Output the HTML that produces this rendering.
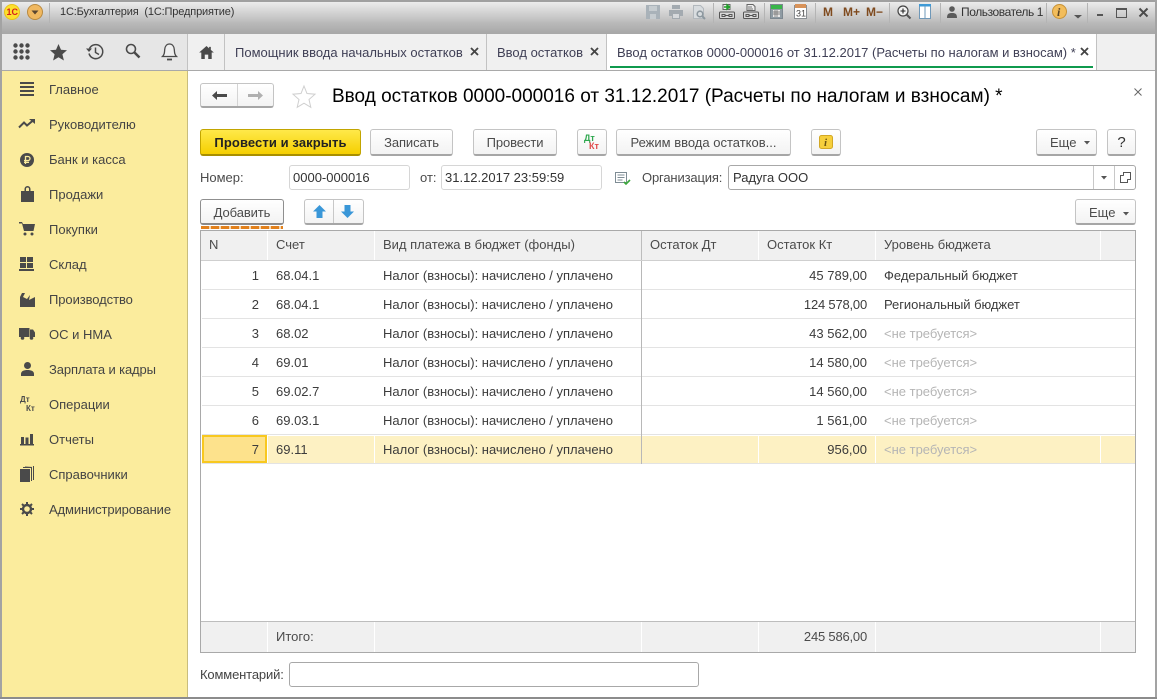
<!DOCTYPE html>
<html><head><meta charset="utf-8"><style>
html,body{margin:0;padding:0}
body{width:1157px;height:699px;overflow:hidden;position:relative;background:#fff;font:13px "Liberation Sans",sans-serif;color:#4b4b4b}
.a{position:absolute}
.t{position:absolute;white-space:nowrap;line-height:14px}
.btn{position:absolute;box-sizing:border-box;border:1px solid #c4c4c4;border-bottom:2px solid #a6a6a6;border-radius:3px;background:linear-gradient(#fff,#f3f3f3);text-align:center;line-height:23px;white-space:nowrap;color:#4b4b4b}
.inp{position:absolute;box-sizing:border-box;border:1px solid #d6d6d6;border-radius:3px;background:#fff;color:#333;line-height:24px;padding-left:3px;white-space:nowrap}
.v{position:absolute;width:1px;background:#dcdcdc}
.h{position:absolute;height:1px;left:202px;width:933px;background:#e3e3e3}
svg{position:absolute;overflow:visible}
.r{text-align:right}
.g{color:#b5b5b5}
.d{color:#3c3c3c}
.s{position:absolute;top:3px;width:1px;height:20px;background:#b4b4b4}
</style></head><body>
<div class="a" style="left:0;top:0;width:1157px;height:34px;background:linear-gradient(#ececec 2px,#d4d4d4 12px,#bfbfbf 21px,#bbb 22px,#a8a8a8 33px)"></div>
<div class="a" style="left:0;top:0;width:1157px;height:2px;background:#a0a0a0"></div>
<div class="a" style="left:0;top:0;width:2px;height:699px;background:#a3a3a3"></div>
<div class="a" style="left:1155px;top:0;width:2px;height:699px;background:#a3a3a3"></div>
<div class="a" style="left:0;top:697px;width:1157px;height:2px;background:#8c8c8c"></div>

<svg style="left:4px;top:4px" width="16" height="16"><circle cx="8" cy="8" r="7.500" fill="#fde02c" stroke="#e8c21a"/><text x="2.500" y="11" font-size="9" font-weight="bold" fill="#d3201c" font-family="Liberation Sans">1С</text></svg>
<svg style="left:27px;top:4px" width="16" height="16"><circle cx="8" cy="8" r="7.500" fill="#f0b860" stroke="#b98a40"/><path d="M4.500 6.500h7L8 10.500z" fill="#5a4630"/></svg>
<div class="s" style="left:49px"></div>
<div class="t" style="left:60px;top:5px;font-size:11px;color:#333;letter-spacing:-.15px">1С:Бухгалтерия&nbsp; (1С:Предприятие)</div>

<!-- title bar tools -->
<svg style="left:646px;top:5px" width="14" height="14"><path d="M0 0h14v14H0z" fill="#a9b2b9"/><path d="M3 1h8v5H3zM4 9h6v5H4z" fill="#c6ccd0"/></svg>
<svg style="left:669px;top:5px" width="14" height="14"><path d="M3 0h8v4H3zM0 5h14v6h-3v3H3v-3H0z" fill="#a3aab0"/><path d="M4 9h6v4H4z" fill="#d6d9dc"/></svg>
<svg style="left:693px;top:5px" width="14" height="15"><path d="M.5.500h7l3 3v10h-10z" fill="#d8dcdf" stroke="#b2b8bd"/><circle cx="7" cy="9" r="2.800" fill="none" stroke="#8d989f" stroke-width="1.600"/><path d="M9 11l3 3" stroke="#8d989f" stroke-width="2"/></svg>
<div class="s" style="left:713px"></div>
<svg style="left:719px;top:4px" width="17" height="15"><path d="M4 .5h7v5H4z" fill="#eee" stroke="#666"/><path d="M5 3h4M8 1l2.500 2L8 5z" stroke="#22a22a" fill="#22a22a" stroke-width="1.500"/><rect x=".5" y="8" width="15" height="6.500" rx="1" fill="#d8d8d8" stroke="#555"/><path d="M3 10.500h3v2H3zM10 10.500h3v2h-3zM6 11.500h4" stroke="#555" fill="none"/></svg>
<svg style="left:743px;top:4px" width="17" height="15"><path d="M4 .5h6l2 2v4H4z" fill="#eee" stroke="#666"/><path d="M5 3h4M5 5h5" stroke="#777"/><rect x=".5" y="8" width="15" height="6.500" rx="1" fill="#d8d8d8" stroke="#555"/><path d="M3 10.500h3v2H3zM10 10.500h3v2h-3zM6 11.500h4" stroke="#555" fill="none"/></svg>
<div class="s" style="left:764px"></div>
<svg style="left:770px;top:4px" width="13" height="15"><rect x=".5" y=".5" width="12" height="14" fill="#8f9ba3" stroke="#7d8890"/><rect x="1" y="1" width="11" height="4" fill="#39b54a"/><rect x="3" y="6" width="7" height="7" fill="#e8e8e8"/><path d="M5 6v7M7 6v7M3 8h7M3 10h7" stroke="#666" stroke-width=".7"/></svg>
<svg style="left:794px;top:3px" width="13" height="16"><rect x=".5" y="2.500" width="12" height="13" fill="#fff" stroke="#8a8f93"/><rect x="1" y="1" width="11" height="4" fill="#d8935a"/><text x="2" y="13.500" font-size="9" fill="#444" font-family="Liberation Sans">31</text></svg>
<div class="s" style="left:815px"></div>
<div class="t" style="left:823px;top:5px;font-size:12px;font-weight:bold;color:#7f4a1e">M</div>
<div class="t" style="left:843px;top:5px;font-size:12px;font-weight:bold;color:#7f4a1e">M+</div>
<div class="t" style="left:866px;top:5px;font-size:12px;font-weight:bold;color:#7f4a1e">M−</div>
<div class="s" style="left:889px"></div>
<svg style="left:897px;top:5px" width="14" height="14"><circle cx="6" cy="6" r="5" fill="#f3f3f3" stroke="#444" stroke-width="1.200"/><path d="M3.500 6h5M6 3.500v5" stroke="#222" stroke-width="1.100"/><path d="M9.500 9.500l4 4" stroke="#555" stroke-width="2"/></svg>
<svg style="left:919px;top:4px" width="12" height="15"><rect x=".5" y=".5" width="11" height="14" fill="#fff" stroke="#6f98b8"/><rect x="0" y="0" width="12" height="2.500" fill="#3f9ad6"/><path d="M6 2v13" stroke="#6f98b8"/></svg>
<div class="s" style="left:940px"></div>
<svg style="left:947px;top:6px" width="10" height="12"><circle cx="5" cy="3" r="2.800" fill="#5a5a5a"/><path d="M0 12c0-4 1.500-5 5-5s5 1 5 5z" fill="#5a5a5a"/></svg>
<div class="t" style="left:961px;top:5px;font-size:12px;color:#333;letter-spacing:-.42px">Пользователь 1</div>
<div class="s" style="left:1046px"></div>
<svg style="left:1052px;top:4px" width="15" height="15"><circle cx="7.500" cy="7.500" r="7" fill="#f2bd5c" stroke="#c79236"/><text x="5" y="12" font-size="12" font-weight="bold" font-style="italic" fill="#5a4526" font-family="Liberation Serif">i</text></svg>
<svg style="left:1074px;top:15px" width="8" height="4"><path d="M0 0h8L4 3.500z" fill="#555"/></svg>
<div class="s" style="left:1087px"></div>
<div class="a" style="left:1097px;top:14px;width:6px;height:2px;background:#555"></div>
<div class="a" style="left:1116px;top:8px;box-sizing:border-box;width:11px;height:10px;border:1px solid #555;border-top-width:2px"></div>
<svg style="left:1139px;top:8px" width="9" height="9"><path d="M.5.500l8 8M8.500.500l-8 8" stroke="#4b4b4b" stroke-width="2"/></svg>

<!-- Panel row -->
<div class="a" style="left:2px;top:34px;width:185px;height:36px;background:#e6e6e6"></div>
<div class="a" style="left:187px;top:34px;width:968px;height:36px;background:#f0f0f0"></div>
<div class="a" style="left:2px;top:70px;width:1153px;height:1px;background:#a9a9a9"></div>
<div class="a" style="left:187px;top:34px;width:1px;height:36px;background:#c2c2c2"></div>
<div class="a" style="left:224px;top:34px;width:1px;height:36px;background:#c2c2c2"></div>
<div class="a" style="left:486px;top:34px;width:1px;height:36px;background:#c2c2c2"></div>
<div class="a" style="left:606px;top:34px;width:1px;height:36px;background:#c2c2c2"></div>
<div class="a" style="left:607px;top:34px;width:489px;height:36px;background:#fff"></div>
<div class="a" style="left:1096px;top:34px;width:1px;height:36px;background:#c2c2c2"></div>
<div class="a" style="left:610px;top:66px;width:483px;height:2px;background:#0f9a4e"></div>

<svg style="left:13px;top:43px" width="18" height="18" fill="#4a4a4a"><circle cx="2.500" cy="2.500" r="2.200"/><circle cx="8.500" cy="2.500" r="2.200"/><circle cx="14.500" cy="2.500" r="2.200"/><circle cx="2.500" cy="8.500" r="2.200"/><circle cx="8.500" cy="8.500" r="2.200"/><circle cx="14.500" cy="8.500" r="2.200"/><circle cx="2.500" cy="14.500" r="2.200"/><circle cx="8.500" cy="14.500" r="2.200"/><circle cx="14.500" cy="14.500" r="2.200"/></svg>
<svg style="left:50px;top:44px" width="17" height="17"><path d="M8.500 0l2.500 5.800 6 .5-4.600 4 1.500 6.200-5.400-3.300-5.400 3.300 1.500-6.200L0 6.300l6-.5z" fill="#4a4a4a"/></svg>
<svg style="left:86px;top:43px" width="18" height="18" fill="none" stroke="#4a4a4a" stroke-width="1.500"><path d="M3.500 5.500a7 7 0 1 1-.5 5"/><path d="M0 5.500l3 3.500 3-3.500z" fill="#4a4a4a" stroke="none"/><path d="M9.500 4.500v5l3.500 2"/></svg>
<svg style="left:125px;top:43px" width="16" height="17" fill="none" stroke="#4a4a4a"><circle cx="6" cy="6" r="4.500" stroke-width="1.600"/><path d="M9.500 9.500l5 5" stroke-width="2.500"/></svg>
<svg style="left:161px;top:43px" width="17" height="18" fill="none" stroke="#4a4a4a" stroke-width="1.300"><path d="M1.500 13.500c2-2 2-4 2.200-7C4 3 6 1 8.500 1s4.500 2 4.800 5.500c.2 3 .2 5 2.200 7z" fill="#efefef"/><path d="M6 16.500h5" stroke-width="1.800"/></svg>
<svg style="left:199px;top:46px" width="15" height="13" viewBox="0 0 17 15"><path d="M8.500 0L0 7.500h2.500V15h4v-5h4v5h4V7.500H17L13.500 4.500V1h-2v1.800z" fill="#4a4a4a"/></svg>

<div class="t" style="left:235px;top:46px;color:#3f3f55">Помощник ввода начальных остатков</div>
<svg style="left:470px;top:47px" width="9" height="9"><path d="M1 1l7 7M8 1L1 8" stroke="#444" stroke-width="1.800"/></svg>
<div class="t" style="left:497px;top:46px;color:#3f3f55">Ввод остатков</div>
<svg style="left:590px;top:47px" width="9" height="9"><path d="M1 1l7 7M8 1L1 8" stroke="#444" stroke-width="1.800"/></svg>
<div class="t" style="left:617px;top:46px;color:#3f3f55">Ввод остатков 0000-000016 от 31.12.2017 (Расчеты по налогам и взносам) *</div>
<svg style="left:1080px;top:47px" width="9" height="9"><path d="M1 1l7 7M8 1L1 8" stroke="#444" stroke-width="1.800"/></svg>

<!-- sidebar -->
<div class="a" style="left:2px;top:71px;width:185px;height:626px;background:#fbec9d"></div>
<div class="a" style="left:187px;top:71px;width:1px;height:626px;background:#c9bd7d"></div>
<div class="t" style="left:49px;top:83px;color:#444">Главное</div>
<div class="t" style="left:49px;top:118px;color:#444">Руководителю</div>
<div class="t" style="left:49px;top:153px;color:#444">Банк и касса</div>
<div class="t" style="left:49px;top:188px;color:#444">Продажи</div>
<div class="t" style="left:49px;top:223px;color:#444">Покупки</div>
<div class="t" style="left:49px;top:258px;color:#444">Склад</div>
<div class="t" style="left:49px;top:293px;color:#444;letter-spacing:-.08px">Производство</div>
<div class="t" style="left:49px;top:328px;color:#444">ОС и НМА</div>
<div class="t" style="left:49px;top:363px;color:#444;letter-spacing:-.12px">Зарплата и кадры</div>
<div class="t" style="left:49px;top:398px;color:#444">Операции</div>
<div class="t" style="left:49px;top:433px;color:#444">Отчеты</div>
<div class="t" style="left:49px;top:468px;color:#444">Справочники</div>
<div class="t" style="left:49px;top:503px;color:#444;letter-spacing:-.12px">Администрирование</div>

<svg style="left:20px;top:82px" width="14" height="14" fill="#4a4a4a"><path d="M0 0h14v2H0zM0 4h14v2H0zM0 8h14v2H0zM0 12h14v2H0z"/></svg>
<svg style="left:19px;top:119px" width="16" height="10" fill="none" stroke="#4a4a4a" stroke-width="2"><path d="M0 8.500l5-5 3 3 6-5"/><path d="M10 0h6v5z" fill="#4a4a4a" stroke="none"/></svg>
<svg style="left:20px;top:153px" width="14" height="14"><circle cx="7" cy="7" r="7" fill="#4a4a4a"/><path d="M5.500 11V3.500h2.500a2 2 0 0 1 0 4H4M4 9.300h5" fill="none" stroke="#fbec9d" stroke-width="1.300"/></svg>
<svg style="left:21px;top:186px" width="13" height="16"><path d="M0 5h3.500V3a3 3 0 0 1 6 0v2H13v11H0z" fill="#4a4a4a"/><path d="M5 5V3a1.500 1.500 0 0 1 3 0v2z" fill="#fbec9d"/></svg>
<svg style="left:19px;top:222px" width="16" height="14" fill="#4a4a4a"><path d="M0 0h3l1 2h12l-1.500 7H5L3 1.500H0z"/><circle cx="6" cy="12" r="1.500"/><circle cx="13" cy="12" r="1.500"/></svg>
<svg style="left:19px;top:257px" width="15" height="14" fill="#4a4a4a"><path d="M1 0h6v5H1zM8 0h6v5H8zM1 6h6v5H1zM8 6h6v5H8zM0 12h15v2H0z"/></svg>
<svg style="left:20px;top:292px" width="15" height="15" fill="#4a4a4a"><path d="M0 15V5L2 1h3L3 5l4 2 3-4-1 5 6-3v10z"/></svg>
<svg style="left:19px;top:328px" width="16" height="12" fill="#4a4a4a"><path d="M0 0h10.500v9H0zM11 1.500h3l2 3V9h-5z"/><circle cx="3.500" cy="10" r="1.800"/><circle cx="12.500" cy="10" r="1.800"/></svg>
<svg style="left:21px;top:362px" width="13" height="14" fill="#4a4a4a"><circle cx="6.500" cy="3.500" r="3.500"/><path d="M0 14v-2c0-3 3-4 6.500-4s6.500 1 6.500 4v2z"/></svg>
<div class="t" style="left:20px;top:396px;font-size:8px;font-weight:bold;line-height:8px;color:#4a4a4a">Дт</div>
<div class="t" style="left:26px;top:405px;font-size:8px;font-weight:bold;line-height:8px;color:#4a4a4a">Кт</div>
<svg style="left:20px;top:434px" width="14" height="12" fill="#4a4a4a"><path d="M1 3h3v7H1zM5.500 3.500h3V10h-3zM10 0h3v10h-3zM0 10h14v1.500H0z"/></svg>
<svg style="left:20px;top:466px" width="14" height="16" fill="#4a4a4a"><path d="M0 3h10v13H0zM11 2v13h1V1H3v1zM13 0v14h1V0H5v.5z"/></svg>
<svg style="left:20px;top:502px" width="14" height="14"><circle cx="7" cy="7" r="4" fill="none" stroke="#4a4a4a" stroke-width="2.400"/><path d="M7 0v3M7 11v3M0 7h3M11 7h3M2 2l2 2M10 10l2 2M12 2l-2 2M4 10l-2 2" stroke="#4a4a4a" stroke-width="2"/></svg>

<!-- header -->
<div class="btn" style="left:200px;top:83px;width:74px;height:25px"></div>
<div class="a" style="left:237px;top:84px;width:1px;height:22px;background:#d4d4d4"></div>
<svg style="left:212px;top:90px" width="15" height="11"><path d="M0 5.500L5 1v3h10v3H5v3z" fill="#4a4a4a"/></svg>
<svg style="left:248px;top:90px" width="15" height="11"><path d="M15 5.500L10 1v3H0v3h10v3z" fill="#b0b0b0"/></svg>
<svg style="left:292px;top:85px" width="24" height="23"><path d="M12 1l3 7.500 8 .7-6 5.300 1.800 7.800L12 18.200l-6.800 4.100L7 14.500 1 9.200l8-.7z" fill="#fff" stroke="#cfcfcf"/></svg>
<div class="t" style="left:332px;top:86px;font-size:19px;line-height:21px;color:#000">Ввод остатков 0000-000016 от 31.12.2017 (Расчеты по налогам и взносам) *</div>
<svg style="left:1134px;top:88px" width="8" height="8"><path d="M.5.500l7 7M7.500.500l-7 7" stroke="#666"/></svg>

<div class="btn" style="left:200px;top:129px;width:161px;height:27px;line-height:26px;background:linear-gradient(#ffe94a,#f5cf00);border:1px solid #c2a500;border-bottom:2px solid #a88f00;color:#222;font-weight:bold;letter-spacing:.1px">Провести и закрыть</div>
<div class="btn" style="left:370px;top:129px;width:83px;height:27px;line-height:26px;letter-spacing:-.1px">Записать</div>
<div class="btn" style="left:473px;top:129px;width:84px;height:27px;line-height:26px;letter-spacing:-.1px">Провести</div>
<div class="btn" style="left:577px;top:129px;width:30px;height:27px"></div>
<div class="t" style="left:584px;top:134px;font-size:9px;font-weight:bold;line-height:9px;color:#2fa84f">Дт</div>
<div class="t" style="left:589px;top:142px;font-size:9px;font-weight:bold;line-height:9px;color:#e04b4b">Кт</div>
<div class="btn" style="left:616px;top:129px;width:175px;height:27px;line-height:26px">Режим ввода остатков...</div>
<div class="btn" style="left:811px;top:129px;width:30px;height:27px"></div>
<svg style="left:819px;top:135px" width="14" height="14"><rect x=".5" y=".5" width="13" height="13" rx="2" fill="#f6cf3c" stroke="#d3a824"/><text x="5" y="11" font-size="11" font-weight="bold" font-style="italic" fill="#6d5510" font-family="Liberation Serif">i</text></svg>
<div class="btn" style="left:1036px;top:129px;width:61px;height:27px;line-height:26px;text-align:left;padding-left:13px">Еще</div>
<svg style="left:1084px;top:141px" width="6" height="4"><path d="M0 0h6L3 3.500z" fill="#555"/></svg>
<div class="btn" style="left:1107px;top:129px;width:29px;height:27px;line-height:26px;color:#333;font-size:15px">?</div>

<div class="t" style="left:200px;top:171px">Номер:</div>
<div class="inp" style="left:289px;top:165px;width:121px;height:25px">0000-000016</div>
<div class="t" style="left:420px;top:171px">от:</div>
<div class="inp" style="left:441px;top:165px;width:161px;height:25px">31.12.2017 23:59:59</div>
<svg style="left:615px;top:172px" width="16" height="14"><rect x=".5" y=".5" width="11" height="10" fill="#fff" stroke="#7e8c94"/><path d="M2.500 3h7M2.500 5.500h7M2.500 8h5" stroke="#7e8c94"/><path d="M9 10l2 2 4-4" fill="none" stroke="#3aa83a" stroke-width="1.600"/></svg>
<div class="t" style="left:642px;top:171px;letter-spacing:-.15px">Организация:</div>
<div class="a" style="left:728px;top:165px;box-sizing:border-box;width:408px;height:25px;border:1px solid #a8a8a8;border-radius:3px;background:#fff"></div>
<div class="t" style="left:733px;top:171px;color:#333">Радуга ООО</div>
<div class="a" style="left:1093px;top:166px;width:1px;height:23px;background:#c8c8c8"></div>
<div class="a" style="left:1114px;top:166px;width:1px;height:23px;background:#c8c8c8"></div>
<svg style="left:1101px;top:176px" width="6" height="4"><path d="M0 0h6L3 3.500z" fill="#555"/></svg>
<svg style="left:1120px;top:172px" width="11" height="11" fill="#fff" stroke="#555"><rect x="3.500" y=".5" width="7" height="7"/><path d="M3.500 3.500h-3v7h7v-3"/></svg>

<div class="btn" style="left:200px;top:199px;width:84px;height:26px;border-color:#8f8f8f;border-bottom-color:#8a8a8a;line-height:25px;letter-spacing:-.1px">Добавить</div>
<div class="a" style="left:201px;top:226px;width:82px;height:3px;background:repeating-linear-gradient(90deg,#e2811d 0 8px,#f5d7b0 8px 10px)"></div>
<div class="btn" style="left:304px;top:199px;width:60px;height:26px"></div>
<div class="a" style="left:333px;top:200px;width:1px;height:23px;background:#c8c8c8"></div>
<svg style="left:313px;top:205px" width="13" height="13"><path d="M6.500 0L13 6.500H9.500V13h-6V6.500H0z" fill="#3a97d8"/></svg>
<svg style="left:341px;top:205px" width="13" height="13"><path d="M6.500 13L13 6.500H9.500V0h-6v6.500H0z" fill="#3a97d8"/></svg>
<div class="btn" style="left:1075px;top:199px;width:61px;height:26px;line-height:25px;text-align:left;padding-left:13px">Еще</div>
<svg style="left:1123px;top:212px" width="6" height="4"><path d="M0 0h6L3 3.500z" fill="#555"/></svg>

<!-- table -->
<div class="a" style="left:200px;top:230px;box-sizing:border-box;width:936px;height:423px;border:1px solid #a9a9a9;background:#fff"></div>
<div class="a" style="left:201px;top:231px;width:934px;height:29px;background:#f0f0f0"></div>
<div class="a" style="left:201px;top:260px;width:934px;height:1px;background:#cfcfcf"></div>
<div class="a" style="left:201px;top:622px;width:934px;height:30px;background:#f0f0f0"></div>
<div class="a" style="left:201px;top:621px;width:934px;height:1px;background:#bdbdbd"></div>

<div class="a" style="left:202px;top:436px;width:933px;height:27px;background:#fdf1c3"></div>
<div class="a" style="left:202px;top:435px;box-sizing:border-box;width:65px;height:28px;background:#fde28c;border:2px solid #f8c81f"></div>

<div class="h" style="top:289px"></div><div class="h" style="top:318px"></div><div class="h" style="top:347px"></div><div class="h" style="top:376px"></div><div class="h" style="top:405px"></div><div class="h" style="top:434px"></div><div class="h" style="top:463px"></div>

<div class="v" style="left:267px;top:231px;height:29px;background:#fff"></div>
<div class="v" style="left:374px;top:231px;height:29px;background:#fff"></div>
<div class="v" style="left:641px;top:231px;height:29px;background:#bdbdbd"></div>
<div class="v" style="left:758px;top:231px;height:29px;background:#fff"></div>
<div class="v" style="left:875px;top:231px;height:29px;background:#fff"></div>
<div class="v" style="left:1100px;top:231px;height:29px;background:#fff"></div>
<div class="v" style="left:641px;top:261px;height:203px;background:#b8b8b8"></div>
<div class="v" style="left:267px;top:435px;height:28px;background:#fff"></div>
<div class="v" style="left:374px;top:435px;height:28px;background:#fff"></div>
<div class="v" style="left:758px;top:435px;height:28px;background:#fff"></div>
<div class="v" style="left:875px;top:435px;height:28px;background:#fff"></div>
<div class="v" style="left:1100px;top:435px;height:28px;background:#fff"></div>
<div class="v" style="left:267px;top:622px;height:30px;background:#fff"></div>
<div class="v" style="left:374px;top:622px;height:30px;background:#fff"></div>
<div class="v" style="left:641px;top:622px;height:30px;background:#fff"></div>
<div class="v" style="left:758px;top:622px;height:30px;background:#fff"></div>
<div class="v" style="left:875px;top:622px;height:30px;background:#fff"></div>
<div class="v" style="left:1100px;top:622px;height:30px;background:#fff"></div>

<div class="t" style="left:209px;top:238px">N</div>
<div class="t" style="left:276px;top:238px">Счет</div>
<div class="t" style="left:383px;top:238px">Вид платежа в бюджет (фонды)</div>
<div class="t" style="left:650px;top:238px">Остаток Дт</div>
<div class="t" style="left:767px;top:238px">Остаток Кт</div>
<div class="t" style="left:884px;top:238px">Уровень бюджета</div>

<div class="t d r" style="left:220px;width:39px;top:269px">1</div><div class="t d" style="left:276px;top:269px">68.04.1</div><div class="t d" style="left:383px;top:269px">Налог (взносы): начислено / уплачено</div><div class="t d r" style="left:767px;width:100px;top:269px">45 789,00</div><div class="t d" style="left:884px;top:269px">Федеральный бюджет</div>
<div class="t d r" style="left:220px;width:39px;top:298px">2</div><div class="t d" style="left:276px;top:298px">68.04.1</div><div class="t d" style="left:383px;top:298px">Налог (взносы): начислено / уплачено</div><div class="t d r" style="left:767px;width:100px;top:298px;letter-spacing:-.2px">124 578,00</div><div class="t d" style="left:884px;top:298px;letter-spacing:-.05px">Региональный бюджет</div>
<div class="t d r" style="left:220px;width:39px;top:327px">3</div><div class="t d" style="left:276px;top:327px">68.02</div><div class="t d" style="left:383px;top:327px">Налог (взносы): начислено / уплачено</div><div class="t d r" style="left:767px;width:100px;top:327px">43 562,00</div><div class="t g" style="left:884px;top:327px">&lt;не требуется&gt;</div>
<div class="t d r" style="left:220px;width:39px;top:356px">4</div><div class="t d" style="left:276px;top:356px">69.01</div><div class="t d" style="left:383px;top:356px">Налог (взносы): начислено / уплачено</div><div class="t d r" style="left:767px;width:100px;top:356px">14 580,00</div><div class="t g" style="left:884px;top:356px">&lt;не требуется&gt;</div>
<div class="t d r" style="left:220px;width:39px;top:385px">5</div><div class="t d" style="left:276px;top:385px">69.02.7</div><div class="t d" style="left:383px;top:385px">Налог (взносы): начислено / уплачено</div><div class="t d r" style="left:767px;width:100px;top:385px">14 560,00</div><div class="t g" style="left:884px;top:385px">&lt;не требуется&gt;</div>
<div class="t d r" style="left:220px;width:39px;top:414px">6</div><div class="t d" style="left:276px;top:414px">69.03.1</div><div class="t d" style="left:383px;top:414px">Налог (взносы): начислено / уплачено</div><div class="t d r" style="left:767px;width:100px;top:414px">1 561,00</div><div class="t g" style="left:884px;top:414px">&lt;не требуется&gt;</div>
<div class="t d r" style="left:220px;width:39px;top:443px">7</div><div class="t d" style="left:276px;top:443px">69.11</div><div class="t d" style="left:383px;top:443px">Налог (взносы): начислено / уплачено</div><div class="t d r" style="left:767px;width:100px;top:443px">956,00</div><div class="t g" style="left:884px;top:443px">&lt;не требуется&gt;</div>

<div class="t" style="left:276px;top:630px">Итого:</div>
<div class="t r" style="left:767px;width:100px;top:630px;letter-spacing:-.2px">245 586,00</div>

<div class="t" style="left:200px;top:668px;color:#444;letter-spacing:-.15px">Комментарий:</div>
<div class="a" style="left:289px;top:662px;box-sizing:border-box;width:410px;height:25px;border:1px solid #a8a8a8;border-radius:3px;background:#fff"></div>
</body></html>
